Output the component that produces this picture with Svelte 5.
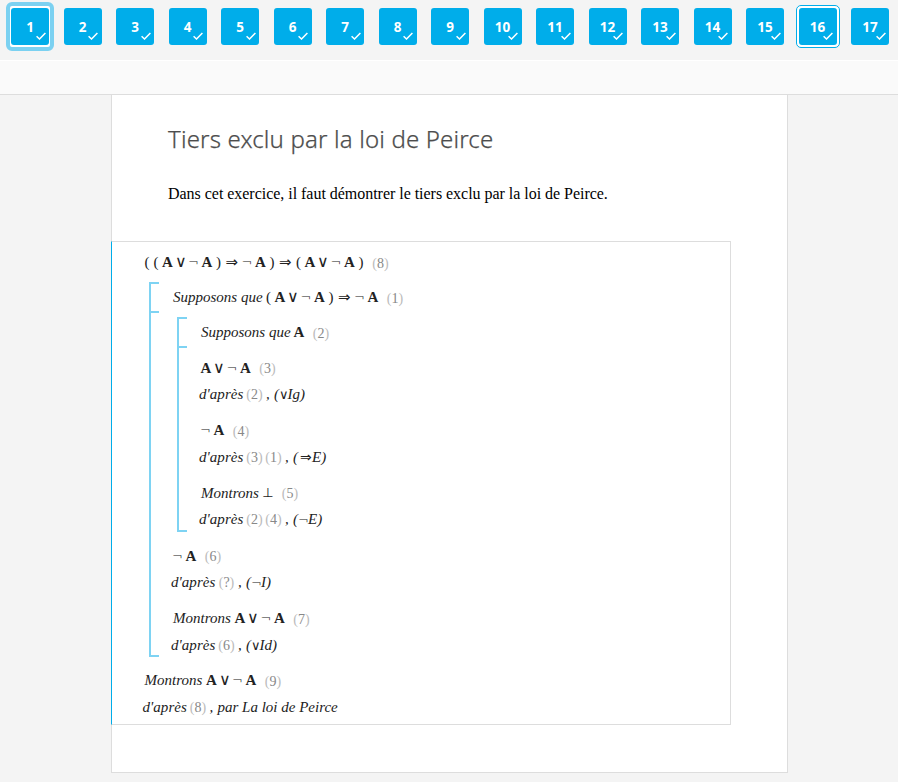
<script>
  const exercises = Array.from({ length: 17 }, (_, i) => i + 1);
  const kinds = { '(': 'par', ')': 'par', A: 'atom', '∨': 'or', '¬': 'not', '⇒': 'imp', '⊥': 'bot' };
</script>

{#snippet line(word, formula, n)}
  <div class="line">
    {#if word}<span class="word" class:long={word !== 'Montrons'}>{word}</span>{/if}
    {#each formula.split('') as s}<span class="sym {kinds[s]}">{s}</span>{/each}
    {@render num(n)}
  </div>
{/snippet}

{#snippet num(n)}
  <span class="num"><i>(</i>{n}<i>)</i></span>
{/snippet}

{#snippet why(refs, rule, mark = '')}
  <div class="why">
    <span class="from">d'après</span>
    {#each refs as r}{@render num(r)}{/each}
    <span class="rule"><span class="comma">,</span>{#if mark}<span>(</span><span class={'m m-' + kinds[mark]}>{mark}</span>{/if}<span>{rule}</span></span>
  </div>
{/snippet}

<nav>
  {#each exercises as n}
    <div class="tile" class:current={n === 1} class:ringed={n === 16}>
      <span>{n}</span>
      <svg width="10" height="8" viewBox="0 0 10 8"><path d="M.6 4.2 3.5 7 9.4 .9" fill="none" stroke="#fff" stroke-width="1.5" /></svg>
    </div>
  {/each}
</nav>
<div class="bar"></div>
<main>
  <h1>Tiers exclu par la loi de Peirce</h1>
  <p>Dans cet exercice, il faut démontrer le tiers exclu par la loi de Peirce.</p>
  <section>
    {@render line('', '((A∨¬A)⇒¬A)⇒(A∨¬A)', 8)}
    <div class="sub outer">
      <div class="head">{@render line('Supposons que', '(A∨¬A)⇒¬A', 1)}</div>
      <div class="sub inner">
        <div class="head">{@render line('Supposons que', 'A', 2)}</div>
        <div class="steps">
          <div>{@render line('', 'A∨¬A', 3)}{@render why([2], 'Ig)', '∨')}</div>
          <div>{@render line('', '¬A', 4)}{@render why([3, 1], 'E)', '⇒')}</div>
          <div>{@render line('Montrons', '⊥', 5)}{@render why([2, 4], 'E)', '¬')}</div>
        </div>
      </div>
      <div class="steps after">
        <div>{@render line('', '¬A', 6)}{@render why(['?'], 'I)', '¬')}</div>
        <div>{@render line('Montrons', 'A∨¬A', 7)}{@render why([6], 'Id)', '∨')}</div>
      </div>
    </div>
    <div class="steps after">
      <div>{@render line('Montrons', 'A∨¬A', 9)}{@render why([8], 'par La loi de Peirce')}</div>
    </div>
  </section>
</main>

<style>
  :global(body) { background: #f4f4f4; overflow: hidden; }
  nav { display: flex; gap: 14.5px; height: 60px; padding: 8px 0 0 11px; box-sizing: border-box; }
  .tile { position: relative; flex: none; width: 38px; height: 37px; border-radius: 3px; background: #00adea; color: #fff; font: bold 13.5px/38px "Open Sans", sans-serif; text-align: center; }
  .tile svg { position: absolute; right: 3.5px; bottom: 5px; }
  .current::before { content: ''; position: absolute; inset: -6px -5px; z-index: -1; border: 4px solid #7bd1f1; border-radius: 6px; background: #fff; box-sizing: border-box; }
  .ringed::before { content: ''; position: absolute; inset: -3px; z-index: -1; border: 1px solid #00adea; border-radius: 5px; background: #fff; box-sizing: border-box; }
  .bar { height: 35px; box-sizing: border-box; background: #fafafa; border-top: 1px solid #fff; border-bottom: 1px solid #ddd; }
  main { width: 677px; height: 678px; margin-left: 111px; box-sizing: border-box; border: 1px solid #ddd; border-top: 0; background: #fff; }
  h1 { margin: 0; padding: 27px 0 0 56px; font: 300 24px/34px "Noto Sans", sans-serif; letter-spacing: .16px; -webkit-text-stroke: .25px #4d4d4d; color: #4d4d4d; white-space: nowrap; }
  p { margin: 27px 0 0 56px; font: 16px/22px "Liberation Serif", serif; letter-spacing: -.03px; color: #000; white-space: nowrap; }
  section { width: 620px; height: 484px; margin: 36px 0 0 -1px; padding: 7px 0 0 30.5px; box-sizing: border-box; border: 1px solid #ddd; border-left-color: #00adea; font: 15px "Liberation Serif", serif; color: #222; }
  .line { display: flex; align-items: center; height: 27px; }
  .line .num { margin-left: 5.5px; padding-top: 2px; }
  .sym { flex: none; text-align: center; line-height: 18px; padding-bottom: 1px; }
  .par { width: 9px; }
  .atom { width: 14px; font-weight: bold; }
  .or, .not, .imp, .bot { font-family: "DejaVu Sans", sans-serif; font-size: 13px; }
  .or { width: 12.5px; font-size: 15.5px; font-weight: 200; }
  .not { width: 13px; font-weight: 200; }
  .imp { width: 17.5px; font-size: 15px; }
  .bot { width: 14px; }
  .word { width: 60px; font-style: italic; white-space: nowrap; margin-left: 2px; }
  .word.long { width: 91px; }
  .num { width: 19px; flex: none; text-align: center; font: 14px "Liberation Serif", serif; color: #888; }
  .num i { font-style: normal; color: #bbb; }
  .why { display: flex; align-items: center; height: 25px; padding-top: 1.5px; box-sizing: border-box; font-style: italic; }
  .from { width: 46px; letter-spacing: .05px; }
  .why .num { padding-top: 1px; }
  .rule { display: flex; align-items: center; margin-left: 2px; white-space: nowrap; }
  .comma { width: 8px; }
  .m { font: 13px/17px "DejaVu Sans", sans-serif; }
  .m-or { font-size: 13px; font-weight: 200; width: 9px; margin-left: -.5px; }
  .m-imp { font-size: 14px; font-style: italic; width: 12px; margin-left: 2px; }
  .m-not { width: 10px; font-weight: 200; }
  .sub { position: relative; border-left: 2px solid #7ed3f3; }
  .outer { margin: 6px 0 0 6.5px; padding: 0 0 0 20px; height: 375px; box-sizing: border-box; }
  .inner { margin: 4px 0 .5px 6px; padding-left: 20px; height: 215px; box-sizing: border-box; }
  .sub::before, .sub::after { content: ''; position: absolute; left: 0; width: 8px; height: 2px; background: #7ed3f3; }
  .sub::before { top: 0; }
  .sub::after { bottom: 0; }
  .head { position: relative; height: 31px; padding-top: 2px; box-sizing: border-box; }
  .head::after { content: ''; position: absolute; left: -20px; bottom: 0; width: 8px; height: 2px; background: #7ed3f3; }
  .steps { display: flex; flex-direction: column; gap: 10.5px; padding-top: 6.5px; }
  .steps.after { padding-top: 10px; }
</style>
